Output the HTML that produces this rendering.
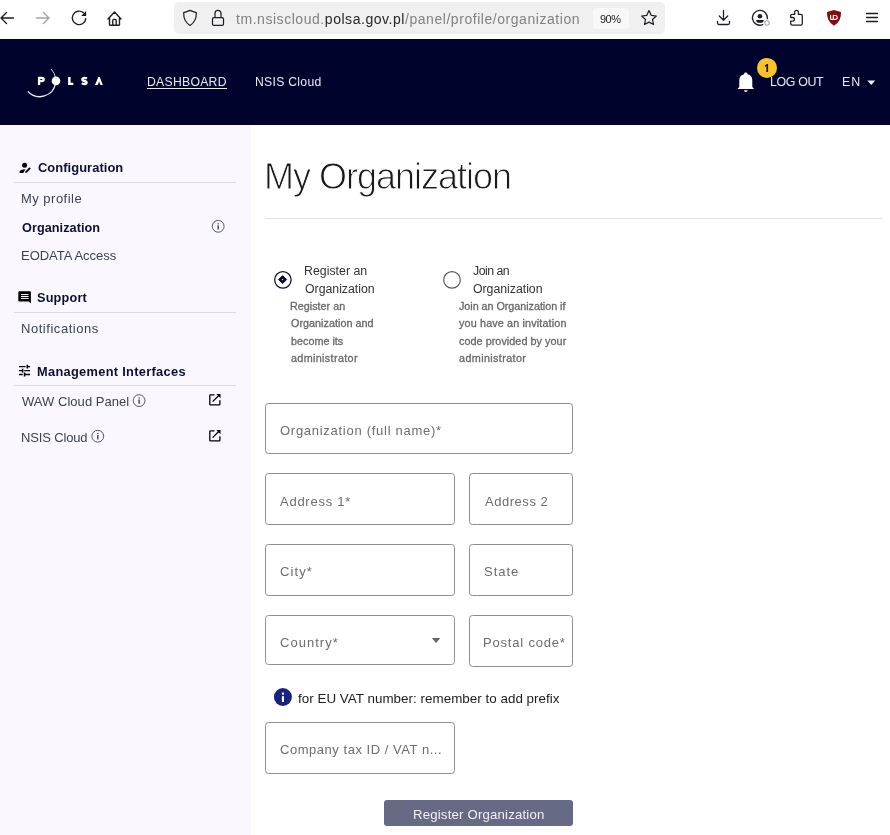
<!DOCTYPE html>
<html><head><meta charset="utf-8"><title>My Organization</title>
<style>
html,body{margin:0;padding:0;width:890px;height:835px;overflow:hidden;background:#fff}
body{position:relative;font-family:"Liberation Sans", sans-serif}
.t{position:absolute;line-height:1;white-space:nowrap;will-change:transform}
.r{position:absolute}
</style></head><body>
<div class="r" style="left:0px;top:0px;width:890px;height:39px;background:#ffffff;"></div>
<div class="r" style="left:174px;top:2px;width:490.5px;height:32px;background:#f0f0f0;border-radius:5px"></div>
<div class="r" style="left:593px;top:8px;width:36px;height:21px;background:#f8f8f8;border-radius:4px"></div>
<svg class="r" style="left:0;top:0" width="890" height="39" viewBox="0 0 890 39">
<g fill="none" stroke="#1f1e25" stroke-width="1.4" stroke-linecap="round" stroke-linejoin="round">
 <path d="M1 18 H13.5 M6.5 12.5 L1 18 L6.5 23.5"/>
 <path d="M36.5 18 H49 M43.5 12.5 L49 18 L43.5 23.5" stroke="#a3a3a8"/>
 <path d="M85.8 18.6 A6.75 6.75 0 1 1 83.3 12.6"/>
 <path d="M108 19 L114.5 12 L121 19 M109.5 17.5 V24.5 Q109.5 25.3 110.3 25.3 H118.7 Q119.5 25.3 119.5 24.5 V17.5 M112.8 25.3 V20.5 Q112.8 19.4 113.9 19.4 H115.1 Q116.2 19.4 116.2 20.5 V25.3"/>
 <path d="M190 10.4 Q186.8 11.9 183.7 12.6 Q183.3 21.2 190 25.5 Q196.7 21.2 196.3 12.6 Q193.2 11.9 190 10.4 Z" stroke-width="1.25"/>
 <path d="M213.8 17.6 H222.2 Q223.5 17.6 223.5 18.9 V24.1 Q223.5 25.4 222.2 25.4 H213.8 Q212.5 25.4 212.5 24.1 V18.9 Q212.5 17.6 213.8 17.6 Z M215 17.6 V13.4 A3 3 0 0 1 221 13.4 V17.6" stroke-width="1.25"/>
 <path d="M649 10.6 L651.2 15.3 L656.3 16 L652.5 19.5 L653.5 24.5 L649 22.1 L644.5 24.5 L645.5 19.5 L641.7 16 L646.8 15.3 Z" stroke-width="1.25"/>
 <path d="M723.5 10.4 V20.2 M719.3 16 L723.5 20.2 L727.7 16 M717.5 21.3 V23 Q717.5 24.5 719 24.5 H728 Q729.5 24.5 729.5 23 V21.3" stroke-width="1.3"/>
 <path d="M767.3 18.6 A7.45 7.45 0 1 0 762.7 24.7" stroke-width="1.35"/>
 <path d="M790.7 16 Q790.7 14.4 792.3 14.4 H794.7 V12.3 A1.85 1.85 0 0 1 798.4 12.3 V14.4 H800.7 Q802.3 14.4 802.3 16 V23.6 Q802.3 25.2 800.7 25.2 H792.3 Q790.7 25.2 790.7 23.6 V21.2 H792.6 A1.85 1.85 0 0 0 792.6 17.5 H790.7 Z" stroke-width="1.3"/>
 <path d="M866.5 13.5 H877.5 M866.5 17.5 H877.5 M866.5 21.5 H877.5" stroke-width="1.3"/>
</g>
<path d="M81.2 15.9 L86.1 11 L86.1 15.9 Z" fill="#15141a"/>
<circle cx="759.9" cy="16.3" r="2.3" fill="#1f1e25"/>
<path d="M756 20.1 H763.8 L763.1 22 Q762.7 22.8 761.8 22.8 H758 Q757.1 22.8 756.7 22 Z" fill="#1f1e25"/>
<circle cx="767" cy="23" r="2.2" fill="#fff" stroke="#a8a8a8" stroke-width="1.1"/>
<path d="M834 10.1 L841 12 Q841.4 21.5 834 25.8 Q826.6 21.5 827 12 Z" fill="#840c0e"/>
<path d="M830.6 15 V18.4 Q830.6 19.3 831.5 19.3 H833.3 V15.5 H835.4 A1.9 1.9 0 0 1 835.4 19.3 H833.3" fill="none" stroke="#fff" stroke-width="1.2"/>
</svg>
<div class="t" style="left:236.2px;top:12.10px;font-size:14px;color:#7b7b85;font-weight:400;letter-spacing:0.545px;"><span style="color:#828282">tm.nsiscloud.</span><span style="color:#262626">polsa.gov.pl</span><span style="color:#828282">/panel/profile/organization</span></div>
<div class="t" style="left:600.2px;top:13.65px;font-size:11px;color:#222;font-weight:400;letter-spacing:-0.5px;">90%</div>
<div class="r" style="left:0px;top:39px;width:890px;height:86px;background:#00042c;"></div>
<svg class="r" style="left:0;top:39px" width="890" height="86" viewBox="0 39 890 86">
<path d="M51 69 A16.1 16.1 0 0 1 55.6 78" fill="none" stroke="#d8d8e4" stroke-width="0.9"/>
<path d="M55.6 83 A16.1 16.1 0 0 1 27.8 91.4" fill="none" stroke="#ececf4" stroke-width="1.3"/>
<path d="M37.9 76.8 H41.9 Q44.8 76.8 44.8 79.5 Q44.8 82.2 41.9 82.2 H40.2 V85 H37.9 Z M40.3 78.9 H41.6 Q42.4 78.9 42.4 79.5 Q42.4 80.1 41.6 80.1 H40.3 Z" fill="#fff" fill-rule="evenodd"/>
<path d="M86.9 78.6 Q86 77.9 84.5 77.9 Q82.4 77.9 82.4 79.5 Q82.4 80.6 84.5 81 Q86.6 81.4 86.6 82.8 Q86.6 84 84.4 84 Q82.7 84 81.8 83.2" fill="none" stroke="#fff" stroke-width="2.3"/>
<circle cx="56" cy="80.9" r="4.3" fill="#fff"/>
<path d="M95 85 L98.3 77 L99.8 77 L102.8 85 L100.3 85 L99.1 81.4 L97.8 85 Z" fill="#fff"/>
<path d="M737.5 88.9 L739.3 87 V80.5 Q739.3 75.3 744.2 74.3 V73.3 Q744.2 72.5 745.8 72.5 Q747.4 72.5 747.4 73.3 V74.3 Q752.3 75.3 752.3 80.5 V87 L754.1 88.9 Z" fill="#fff"/>
<path d="M744 90.3 H747.6 Q747.6 92 745.8 92 Q744 92 744 90.3 Z" fill="#fff"/>
<circle cx="767" cy="67.9" r="10" fill="#fbc22b"/>
<path d="M766.4 71.9 V65.9 L764.9 66.9 V65.4 L766.9 64.1 H768.1 V71.9 Z" fill="#111"/>
<path d="M68.1 76.9 H70.6 V82.7 H73.3 V85 H68.1 Z" fill="#fff"/>
<path d="M867.3 80.4 H875.2 L871.25 85 Z" fill="#eef0f5"/>
</svg>
<div class="t" style="left:146.8px;top:76.03px;font-size:12.2px;color:#e8e9f0;font-weight:400;letter-spacing:0.287px;">DASHBOARD</div>
<div class="r" style="left:147px;top:87.6px;width:80px;height:1.2000000000000028px;background:#e8e9f0;"></div>
<div class="t" style="left:255.4px;top:76.03px;font-size:12.2px;color:#e8e9f0;font-weight:400;letter-spacing:0.289px;">NSIS Cloud</div>
<div class="t" style="left:769.8px;top:76.26px;font-size:12.4px;color:#e8e9f0;font-weight:400;letter-spacing:-0.367px;">LOG OUT</div>
<div class="t" style="left:842px;top:76.26px;font-size:12.4px;color:#e8e9f0;font-weight:400;letter-spacing:1.0px;">EN</div>
<div class="r" style="left:0px;top:125px;width:251px;height:710px;background:#faf8fe;"></div>
<div class="r" style="left:14px;top:182.0px;width:222px;height:1.0px;background:#dcdbe3;"></div>
<div class="r" style="left:14px;top:312.0px;width:222px;height:1.0px;background:#dcdbe3;"></div>
<div class="r" style="left:14px;top:384.5px;width:222px;height:1.0px;background:#dcdbe3;"></div>
<div class="t" style="left:37.6px;top:161.84px;font-size:12.9px;color:#0c0f36;font-weight:700;letter-spacing:0.058px;">Configuration</div>
<div class="t" style="left:21.1px;top:191.85px;font-size:13px;color:#3b4252;font-weight:400;letter-spacing:0.478px;">My profile</div>
<div class="t" style="left:21.8px;top:221.91px;font-size:12.7px;color:#0c0f36;font-weight:700;letter-spacing:0.045px;">Organization</div>
<div class="t" style="left:20.8px;top:249.15px;font-size:13px;color:#3b4252;font-weight:400;letter-spacing:-0.033px;">EODATA Access</div>
<div class="t" style="left:36.6px;top:292.00px;font-size:12.7px;color:#0c0f36;font-weight:700;letter-spacing:0.2px;">Support</div>
<div class="t" style="left:21.1px;top:321.85px;font-size:13px;color:#3b4252;font-weight:400;letter-spacing:0.542px;">Notifications</div>
<div class="t" style="left:36.8px;top:365.72px;font-size:12.8px;color:#0c0f36;font-weight:700;letter-spacing:0.315px;">Management Interfaces</div>
<div class="t" style="left:21.8px;top:395.25px;font-size:13px;color:#3b4252;font-weight:400;letter-spacing:0.036px;">WAW Cloud Panel</div>
<div class="t" style="left:20.8px;top:430.95px;font-size:13px;color:#3b4252;font-weight:400;letter-spacing:-0.156px;">NSIS Cloud</div>
<svg class="r" style="left:0;top:125px" width="251" height="335" viewBox="0 125 251 335">
<circle cx="24.6" cy="165.3" r="2.5" fill="#000"/>
<path d="M19.6 172.9 V171.8 Q19.8 169.6 25.4 169.3 L23.3 172.9 Z" fill="#000"/>
<path d="M25.1 173.1 L25.6 171.3 L29.3 167.2 L30.8 168.4 L27 172.5 Z" fill="#000"/>
<path d="M19.3 291.3 H29.9 Q30.9 291.3 30.9 292.3 V303.6 L28.6 301.4 H19.3 Q18.3 301.4 18.3 300.4 V292.3 Q18.3 291.3 19.3 291.3 Z" fill="#000"/>
<path d="M21 294.6 H28.6 M21 296.5 H28.6 M21 298.4 H28.6" stroke="#fff" stroke-width="1"/>
<g stroke="#000" stroke-width="1.3">
<path d="M19 366.7 H25.5 M27.3 366.7 H30.1 M19 370.7 H22 M24.2 370.7 H30.1 M19 374.5 H22.7 M24.6 374.5 H30.1"/>
<path d="M27.3 364.8 V368.6 M22.6 368.8 V372.6 M24.6 372.6 V376.4" stroke-width="1.6"/>
</g>
<g fill="none" stroke="#4a4f6a" stroke-width="0.95">
<circle cx="218.2" cy="226.3" r="5.9"/>
<circle cx="139.1" cy="400.6" r="5.9"/>
<circle cx="97.8" cy="436.2" r="5.9"/>
</g>
<g stroke="#3c415c" stroke-width="1.4">
<path d="M218.2 225.2 V229.5 M139.1 399.5 V403.8 M97.8 435.1 V439.4"/>
</g>
<g fill="#3c415c"><circle cx="218.2" cy="223.7" r="0.75"/><circle cx="139.1" cy="398" r="0.75"/><circle cx="97.8" cy="433.6" r="0.75"/></g>
<g fill="none" stroke="#000" stroke-width="1.3">
<path d="M214.5 394.8 H210.5 Q209.8 394.8 209.8 395.5 V404.2 Q209.8 404.9 210.5 404.9 H219.2 Q219.9 404.9 219.9 404.2 V400.2 M212.6 401.6 L219.5 394.7"/>
<path d="M214.5 430.8 H210.5 Q209.8 430.8 209.8 431.5 V440.2 Q209.8 440.9 210.5 440.9 H219.2 Q219.9 440.9 219.9 440.2 V436.2 M212.6 437.6 L219.5 430.7"/>
</g>
<path d="M216.3 394.1 H220.5 V398.3 Z M216.3 430.1 H220.5 V434.3 Z" fill="#000"/>
</svg>
<div class="t" style="left:263.8px;top:158.60px;font-size:36px;color:#1a1a1a;font-weight:400;letter-spacing:-1.0px;-webkit-text-stroke:0.9px #fff">My Organization</div>
<div class="r" style="left:265px;top:218px;width:617px;height:1px;background:#e3e3e3;"></div>
<svg class="r" style="left:260px;top:260px" width="220" height="40" viewBox="260 260 220 40">
<circle cx="282.9" cy="279.85" r="8.25" fill="none" stroke="#0a0d33" stroke-width="1.25"/>
<path d="M282.6 275.6 L286.6 279.6 L282.6 283.6 L278.6 279.6 Z" fill="#0a0d33" stroke="#0a0d33" stroke-width="1" stroke-linejoin="round"/>
<rect x="282.1" y="279.1" width="1" height="1" fill="#fff"/>
<circle cx="452" cy="279.9" r="8.3" fill="none" stroke="#5a5a5a" stroke-width="1.2"/>
</svg>
<div class="t" style="left:304.1px;top:265.05px;font-size:12.3px;color:#333333;font-weight:400;letter-spacing:0.03px;">Register an</div>
<div class="t" style="left:305px;top:283.25px;font-size:12.3px;color:#333333;font-weight:400;letter-spacing:-0.009px;">Organization</div>
<div class="t" style="left:473.4px;top:265.05px;font-size:12.3px;color:#333333;font-weight:400;letter-spacing:-0.517px;">Join an</div>
<div class="t" style="left:473.4px;top:283.25px;font-size:12.3px;color:#333333;font-weight:400;letter-spacing:-0.018px;">Organization</div>
<div class="t" style="left:289.9px;top:301.42px;font-size:10.8px;color:#686868;font-weight:400;letter-spacing:0.0px;-webkit-text-stroke:0.3px #686868">Register an</div>
<div class="t" style="left:290.9px;top:318.47px;font-size:10.8px;color:#686868;font-weight:400;letter-spacing:0.02px;-webkit-text-stroke:0.3px #686868">Organization and</div>
<div class="t" style="left:290.9px;top:335.52px;font-size:10.8px;color:#686868;font-weight:400;letter-spacing:0.0px;-webkit-text-stroke:0.3px #686868">become its</div>
<div class="t" style="left:290.9px;top:352.57px;font-size:10.8px;color:#686868;font-weight:400;letter-spacing:0.342px;-webkit-text-stroke:0.3px #686868">administrator</div>
<div class="t" style="left:458.8px;top:301.42px;font-size:10.8px;color:#686868;font-weight:400;letter-spacing:-0.045px;-webkit-text-stroke:0.3px #686868">Join an Organization if</div>
<div class="t" style="left:458.8px;top:318.47px;font-size:10.8px;color:#686868;font-weight:400;letter-spacing:0.143px;-webkit-text-stroke:0.3px #686868">you have an invitation</div>
<div class="t" style="left:458.8px;top:335.52px;font-size:10.8px;color:#686868;font-weight:400;letter-spacing:0.05px;-webkit-text-stroke:0.3px #686868">code provided by your</div>
<div class="t" style="left:458.8px;top:352.57px;font-size:10.8px;color:#686868;font-weight:400;letter-spacing:0.375px;-webkit-text-stroke:0.3px #686868">administrator</div>
<div class="r" style="left:265px;top:403px;width:306px;height:49px;border:1px solid #8e8e8e;border-radius:3.5px"></div>
<div class="r" style="left:265px;top:473px;width:188px;height:50px;border:1px solid #8e8e8e;border-radius:3.5px"></div>
<div class="r" style="left:469px;top:473px;width:102px;height:50px;border:1px solid #8e8e8e;border-radius:3.5px"></div>
<div class="r" style="left:265px;top:544px;width:188px;height:50px;border:1px solid #8e8e8e;border-radius:3.5px"></div>
<div class="r" style="left:469px;top:544px;width:102px;height:50px;border:1px solid #8e8e8e;border-radius:3.5px"></div>
<div class="r" style="left:265px;top:615px;width:188px;height:48px;border:1px solid #8e8e8e;border-radius:3.5px"></div>
<div class="r" style="left:469px;top:615px;width:102px;height:50px;border:1px solid #8e8e8e;border-radius:3.5px"></div>
<div class="r" style="left:265px;top:722px;width:188px;height:50px;border:1px solid #8e8e8e;border-radius:3.5px"></div>
<div class="t" style="left:280.3px;top:424.05px;font-size:13px;color:#6d6d6d;font-weight:400;letter-spacing:0.721px;">Organization (full name)*</div>
<div class="t" style="left:280.4px;top:494.75px;font-size:13px;color:#6d6d6d;font-weight:400;letter-spacing:0.744px;">Address 1*</div>
<div class="t" style="left:484.7px;top:494.75px;font-size:13px;color:#6d6d6d;font-weight:400;letter-spacing:0.537px;">Address 2</div>
<div class="t" style="left:279.6px;top:565.15px;font-size:13px;color:#6d6d6d;font-weight:400;letter-spacing:1.1px;">City*</div>
<div class="t" style="left:483.6px;top:565.15px;font-size:13px;color:#6d6d6d;font-weight:400;letter-spacing:0.975px;">State</div>
<div class="t" style="left:279.6px;top:635.95px;font-size:13px;color:#6d6d6d;font-weight:400;letter-spacing:1.029px;">Country*</div>
<div class="t" style="left:483.4px;top:635.95px;font-size:13px;color:#6d6d6d;font-weight:400;letter-spacing:0.809px;">Postal code*</div>
<div class="t" style="left:279.7px;top:743.15px;font-size:13px;color:#6d6d6d;font-weight:400;letter-spacing:0.533px;">Company tax ID / VAT n...</div>
<svg class="r" style="left:260px;top:630px" width="320" height="80" viewBox="260 630 320 80">
<path d="M431.8 638 H440.3 L436.05 643 Z" fill="#666"/>
<circle cx="282.9" cy="697" r="9" fill="#1a237e"/>
<rect x="281.9" y="692.6" width="2.1" height="2.1" fill="#fff"/>
<rect x="281.9" y="696.2" width="2.1" height="5.7" fill="#fff"/>
</svg>
<div class="t" style="left:297.7px;top:691.91px;font-size:13.4px;color:#1c1c1c;font-weight:400;letter-spacing:0.025px;">for EU VAT number: remember to add prefix</div>
<div class="r" style="left:384.3px;top:800.1px;width:188.3px;height:25.799999999999955px;background:#666a85;border-radius:3px"></div>
<div class="t" style="left:412.8px;top:807.78px;font-size:13.2px;color:#f0f0f5;font-weight:400;letter-spacing:0.185px;">Register Organization</div>
</body></html>
